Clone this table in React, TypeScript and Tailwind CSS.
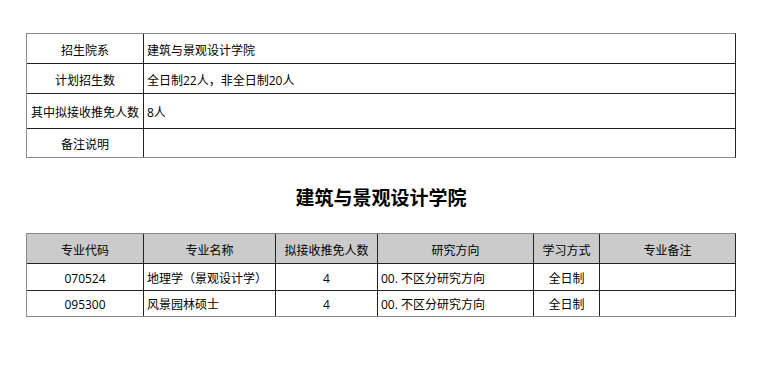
import React from "react";

const font = { fontFamily: '"Open Sans", "Noto Sans CJK SC", "Noto Sans", sans-serif' };

export default function App() {
  const topRows: [string, string, string][] = [
    ["招生院系", "建筑与景观设计学院", "h-[29px]"],
    ["计划招生数", "全日制22人，非全日制20人", "h-[30px]"],
    ["其中拟接收推免人数", "8人", "h-[35px]"],
    ["备注说明", "", "h-[29px]"],
  ];
  const rows = [
    ["070524", "地理学（景观设计学）", "4", "00. 不区分研究方向", "全日制", ""],
    ["095300", "风景园林硕士", "4", "00. 不区分研究方向", "全日制", ""],
  ];
  const outer =
    "w-[710px] border border-t-[#8a8a8a] border-l-[#8a8a8a] border-b-[#8a8a8a] border-r-[#222]";
  return (
    <div
      className="w-[771px] h-[371px] bg-white text-[12px] text-black leading-none [text-spacing-trim:space-all]"
      style={font}
    >
      <div className="pt-[33px] pl-[26px] w-[736px]">
        <div className={outer}>
          {topRows.map(([a, b, h], i) => (
            <div key={i} className={`flex ${h} ${i > 0 ? "border-t border-[#222]" : ""}`}>
              <div className="w-[117px] flex items-center justify-center pt-[4px] border-r border-[#222] whitespace-nowrap">{a}</div>
              <div className="flex-1 flex items-center pt-[4px] pl-[3px]">{b}</div>
            </div>
          ))}
        </div>
        <div className="h-[75px] pt-[5px] flex items-center justify-center font-bold text-[19px] text-black">
          建筑与景观设计学院
        </div>
        <div className={outer}>
          <div className="flex h-[30px] bg-[#cbcbcb] border-b border-[#222]">
            {[
              ["专业代码", "w-[117px]"],
              ["专业名称", "w-[132px]"],
              ["拟接收推免人数", "w-[102px]"],
              ["研究方向", "w-[156px]"],
              ["学习方式", "w-[66px]"],
              ["专业备注", "flex-1"],
            ].map(([t, w], i) => (
              <div key={i} className={`${w} flex items-center justify-center pt-[4px] ${i < 5 ? "border-r border-[#222]" : ""}`}>{t}</div>
            ))}
          </div>
          {rows.map((r, ri) => (
            <div key={ri} className={`flex ${ri === 0 ? "h-[27px] border-b border-[#222]" : "h-[25px]"}`}>
              <div className="w-[117px] flex items-center justify-center pt-[3px] border-r border-[#222]">{r[0]}</div>
              <div className="w-[132px] flex items-center pt-[3px] pl-[3px] border-r border-[#222] whitespace-nowrap">{r[1]}</div>
              <div className="w-[102px] flex items-center justify-center pt-[3px] border-r border-[#222]">{r[2]}</div>
              <div className="w-[156px] flex items-center pt-[3px] pl-[3px] border-r border-[#222]">{r[3]}</div>
              <div className="w-[66px] flex items-center justify-center pt-[3px] border-r border-[#222]">{r[4]}</div>
              <div className="flex-1">{r[5]}</div>
            </div>
          ))}
        </div>
      </div>
    </div>
  );
}
